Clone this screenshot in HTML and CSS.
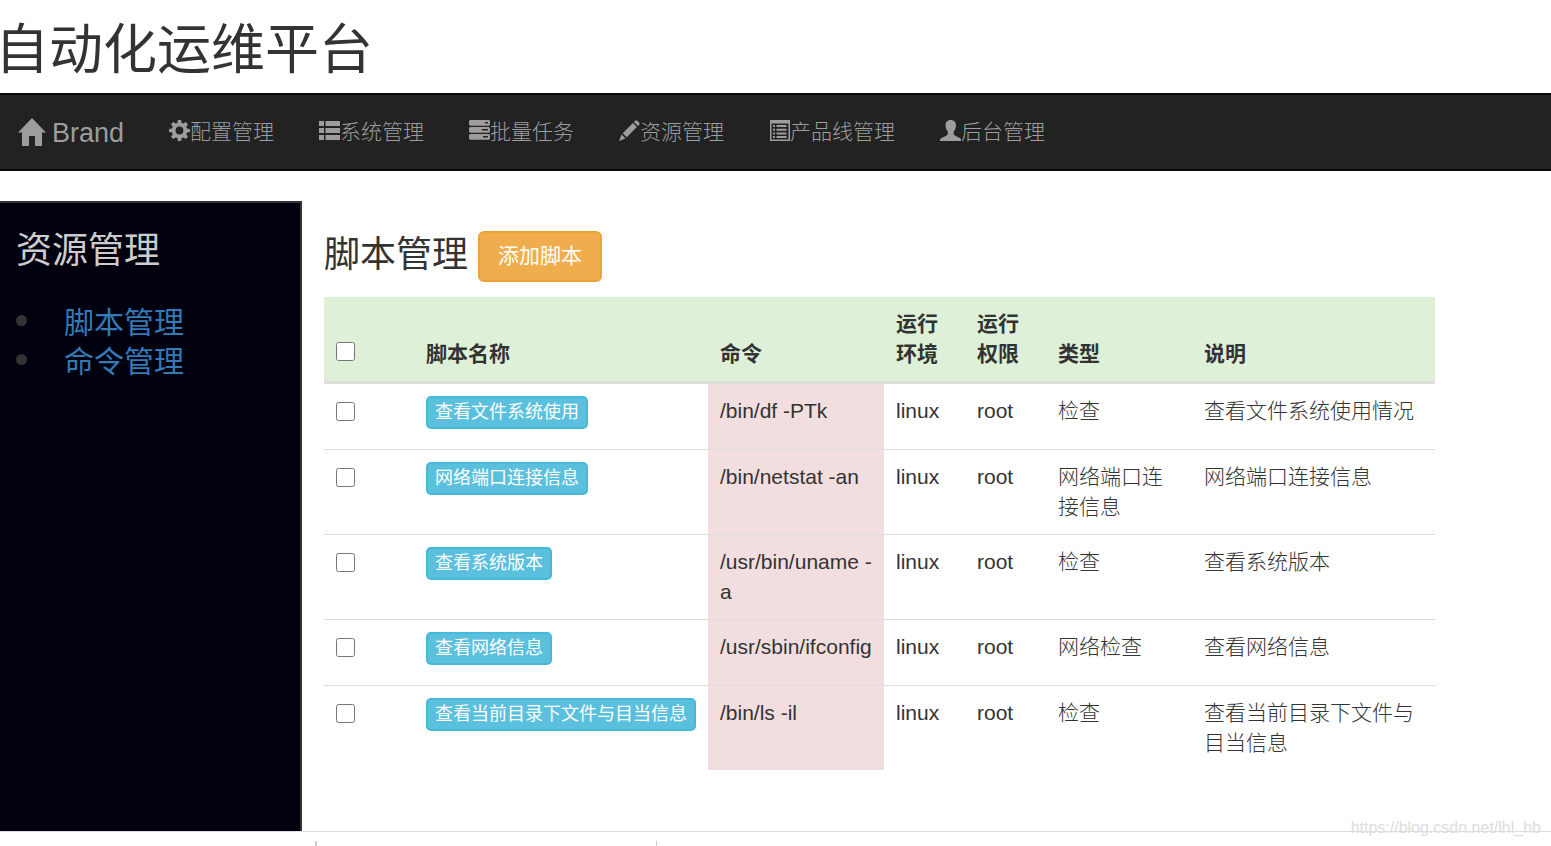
FILE: index.html
```html
<!DOCTYPE html>
<html lang="zh-CN">

<head>
    <title>自动化运维平台</title>
    <meta charset="utf-8">
    <meta name="viewport" content="width=device-width, initial-scale=1">
    <link rel="stylesheet" href="styles.css">
</head>

<body>

    <header>
        <h1>自动化运维平台</h1>
    </header>

    <nav class="navbar">
        <a class="brand" href="#">
            <svg class="icon-home" viewBox="0 0 28 28"><path d="M14 0 28 14.5H24V28H17V18H11V28H4V14.5H0Z"/></svg>
            Brand
        </a>
        <a href="#">
            <svg class="icon" viewBox="0 0 21 21"><path fill-rule="evenodd" d="M8.9 0h3.2l.5 2.9 1.7.7L16.700 2l2.300 2.300-1.700 2.400.7 1.700 3 .5v3.200l-3 .5-.7 1.700 1.700 2.400-2.300 2.300-2.400-1.600-1.700.7-.5 2.900H8.900l-.5-2.900-1.700-.7L4.300 19 2 16.700l1.700-2.400-.7-1.700-3-.5V8.900l3-.5.7-1.700L2 4.300 4.300 2l2.400 1.600 1.700-.7ZM10.500 6.600a3.900 3.900 0 1 0 0 7.800 3.900 3.900 0 0 0 0-7.800Z"/></svg>配置管理
        </a>
        <a href="#">
            <svg class="icon" viewBox="0 0 21 21"><path d="M0 1h5v5H0zM6.500 1H21v5H6.500zM0 8h5v5H0zM6.500 8H21v5H6.500zM0 15h5v5H0zM6.500 15H21v5H6.500z"/></svg>系统管理
        </a>
        <a href="#">
            <svg class="icon" viewBox="0 0 21 21"><path fill-rule="evenodd" d="M1 0h19l1 1v3.500l-1 1.200H1L0 4.500V1ZM16 2v1.500h3V2ZM1 7h19l1 1.200v3.300l-1 1.200H1L0 11.500V8.200ZM13 9v1.500h6V9ZM1 14h19l1 1.200v3.300l-1 1.200H1L0 18.500v-3.300ZM14 16v1.500h5V16Z"/></svg>批量任务
        </a>
        <a href="#">
            <svg class="icon" viewBox="0 0 21 21"><path d="M16.200.8q1-1 2 0l2 2q1 1 0 2l-1.300 1.300-4-4ZM13.900 3.100l4 4L7.700 17.300l-4-4ZM2.600 14.500l3.900 3.900L0 21Z"/></svg>资源管理
        </a>
        <a href="#">
            <svg class="icon" viewBox="0 0 21 21"><path fill-rule="evenodd" d="M1 0h20v21H1ZM2.500 3.500v16h17v-16ZM4 5h2v2H4zM7.500 5H17.500v2H7.500zM4 8.700h2v2H4zM7.500 8.700H17.500v2H7.500zM4 12.400h2v2H4zM7.500 12.400H17.500v2H7.500zM4 16h2v2H4zM7.500 16H17.500v2H7.500z"/></svg>产品线管理
        </a>
        <a href="#">
            <svg class="icon" viewBox="0 0 21 21"><path d="M10.700 0c3.600 0 5.300 2.300 5.300 5.200 0 2.800-1.200 5.100-2.300 6.400v2.200c0 1 .5 1.400 2 2.100l4.300 2c.8.500 1 1.100 1 3.100H0c0-2 .5-2.600 1.500-3.100l4.300-2c1.500-.7 2-1.100 2-2.100v-2.200C6.700 10.300 5.500 8 5.500 5.200 5.500 2.300 7.200 0 10.700 0Z"/></svg>后台管理
        </a>
    </nav>

    <div class="page">

        <aside class="sidebar">
            <h3>资源管理</h3>
            <ul>
                <li><a href="#">脚本管理</a></li>
                <li><a href="#">命令管理</a></li>
            </ul>
        </aside>

        <main>
            <div class="title">
                <h3>脚本管理</h3>
                <button class="btn-warning" type="button">添加脚本</button>
            </div>

            <table>
                <colgroup>
                    <col class="col-check">
                    <col class="col-name">
                    <col class="col-command">
                    <col class="col-short">
                    <col class="col-short">
                    <col class="col-type">
                    <col>
                </colgroup>
                <thead>
                    <tr>
                        <th><input type="checkbox" aria-label="全选"></th>
                        <th>脚本名称</th>
                        <th>命令</th>
                        <th>运行环境</th>
                        <th>运行权限</th>
                        <th>类型</th>
                        <th>说明</th>
                    </tr>
                </thead>
                <tbody>
                    <tr>
                        <td><input type="checkbox" aria-label="查看文件系统使用"></td>
                        <td><button class="btn-info" type="button">查看文件系统使用</button></td>
                        <td class="danger">/bin/df -PTk</td>
                        <td>linux</td>
                        <td>root</td>
                        <td>检查</td>
                        <td>查看文件系统使用情况</td>
                    </tr>
                    <tr>
                        <td><input type="checkbox" aria-label="网络端口连接信息"></td>
                        <td><button class="btn-info" type="button">网络端口连接信息</button></td>
                        <td class="danger">/bin/netstat -an</td>
                        <td>linux</td>
                        <td>root</td>
                        <td>网络端口连接信息</td>
                        <td>网络端口连接信息</td>
                    </tr>
                    <tr>
                        <td><input type="checkbox" aria-label="查看系统版本"></td>
                        <td><button class="btn-info" type="button">查看系统版本</button></td>
                        <td class="danger">/usr/bin/uname -a</td>
                        <td>linux</td>
                        <td>root</td>
                        <td>检查</td>
                        <td>查看系统版本</td>
                    </tr>
                    <tr>
                        <td><input type="checkbox" aria-label="查看网络信息"></td>
                        <td><button class="btn-info" type="button">查看网络信息</button></td>
                        <td class="danger">/usr/sbin/ifconfig</td>
                        <td>linux</td>
                        <td>root</td>
                        <td>网络检查</td>
                        <td>查看网络信息</td>
                    </tr>
                    <tr>
                        <td><input type="checkbox" aria-label="查看当前目录下文件与目当信息"></td>
                        <td><button class="btn-info" type="button">查看当前目录下文件与目当信息</button></td>
                        <td class="danger">/bin/ls -il</td>
                        <td>linux</td>
                        <td>root</td>
                        <td>检查</td>
                        <td>查看当前目录下文件与目当信息</td>
                    </tr>
                </tbody>
            </table>
        </main>

    </div>

    <footer>
        <div class="footer-left"></div>
        <div class="footer-middle"></div>
        <span class="watermark">https://blog.csdn.net/lhl_hb</span>
    </footer>

</body>

</html>
```
FILE: styles.css
```css
* {
    box-sizing: border-box;
}

body {
    background-color: #fff;
    color: #333;
    display: flex;
    flex-direction: column;
    font-family: "Liberation Sans", "Noto Sans CJK SC", sans-serif;
    font-size: 21px;
    font-weight: 300;
    line-height: 30px;
    margin: 0;
    min-height: 100vh;
}

a {
    color: #337ab7;
    text-decoration: none;
}

h1,
h3 {
    font-weight: 400;
    margin: 0;
}

h1 {
    font-size: 54px;
    line-height: 60px;
}

h3 {
    font-size: 36px;
    line-height: 40px;
}

header {
    margin-left: -5px;
    padding: 20px 0 13px;
}

/* top navigation */

.navbar {
    align-items: center;
    background-color: #222;
    border-bottom: 2px solid #080808;
    border-top: 2px solid #080808;
    display: flex;
    height: 78px;
    padding-left: 18px;
}

.navbar a {
    align-items: center;
    color: #9d9d9d;
    display: flex;
    margin-right: 45px;
    white-space: nowrap;
}

.navbar .brand {
    font-size: 27px;
    gap: 6px;
    padding-top: 2px;
}

.navbar svg {
    fill: currentColor;
    flex: none;
    margin-bottom: 3px;
}

.icon {
    height: 21px;
    width: 21px;
}

.icon-home {
    height: 28px;
    width: 28px;
}

/* page content */

.page {
    display: flex;
    flex: 1;
    margin-top: 30px;
}

.sidebar {
    background-color: #00000f;
    border-right: 2px solid #333;
    border-top: 2px solid #333;
    flex: 0 0 302px;
    padding: 28px 16px;
}

.sidebar h3 {
    color: #ccc;
}

.sidebar ul {
    font-size: 30px;
    font-weight: 400;
    line-height: 39px;
    list-style: none;
    margin: 32px 0 0;
    padding: 0;
}

.sidebar li {
    align-items: center;
    display: flex;
    gap: 37px;
}

.sidebar li::before {
    background-color: #333;
    border-radius: 50%;
    content: "";
    height: 11px;
    margin-bottom: 4px;
    width: 11px;
}

main {
    flex: 1;
    padding: 30px 116px 60px 22px;
}

.title {
    align-items: center;
    display: flex;
    gap: 10px;
    margin-bottom: 15px;
}

.title h3 {
    padding-bottom: 4px;
}

button {
    color: #fff;
    cursor: pointer;
    display: block;
    font-family: inherit;
    font-weight: 400;
    white-space: nowrap;
}

.btn-warning {
    background-color: #f0ad4e;
    border: 2px solid #eea236;
    border-radius: 6px;
    font-size: 21px;
    line-height: 30px;
    padding: 8px 18px 9px;
}

.btn-info {
    background-color: #5bc0de;
    border: 2px solid #46b8da;
    border-radius: 5px;
    font-size: 18px;
    line-height: 27px;
    padding: 1px 7px;
}

/* script table */

table {
    border-collapse: collapse;
    table-layout: fixed;
    width: 100%;
}

.col-check {
    width: 90px;
}

.col-name {
    width: 294px;
}

.col-command {
    width: 176px;
}

.col-short {
    width: 81px;
}

.col-type {
    width: 146px;
}

th,
td {
    padding: 12px;
    text-align: left;
}

th {
    background-color: #dff0d8;
    border-bottom: 3px solid #ddd;
    font-weight: 700;
    vertical-align: bottom;
}

td {
    border-top: 1px solid #ddd;
    height: 66px;
    vertical-align: top;
}

tbody tr:first-child td {
    height: 67px;
}

.danger {
    background-color: #f2dede;
}

input[type="checkbox"] {
    display: block;
    height: 19px;
    margin: 6px 0 5px;
    width: 19px;
}

th input[type="checkbox"] {
    margin-bottom: 8px;
}

/* footer */

footer {
    border-top: 1px solid #ddd;
    display: flex;
    height: 15px;
    padding-top: 9px;
    position: relative;
}

.footer-left {
    border-right: 2px solid #ccc;
    width: 317px;
}

.footer-middle {
    border-right: 1px solid #ccc;
    width: 340px;
}

.watermark {
    bottom: 3px;
    color: #ddd;
    font-size: 16px;
    position: absolute;
    right: 10px;
}
```
